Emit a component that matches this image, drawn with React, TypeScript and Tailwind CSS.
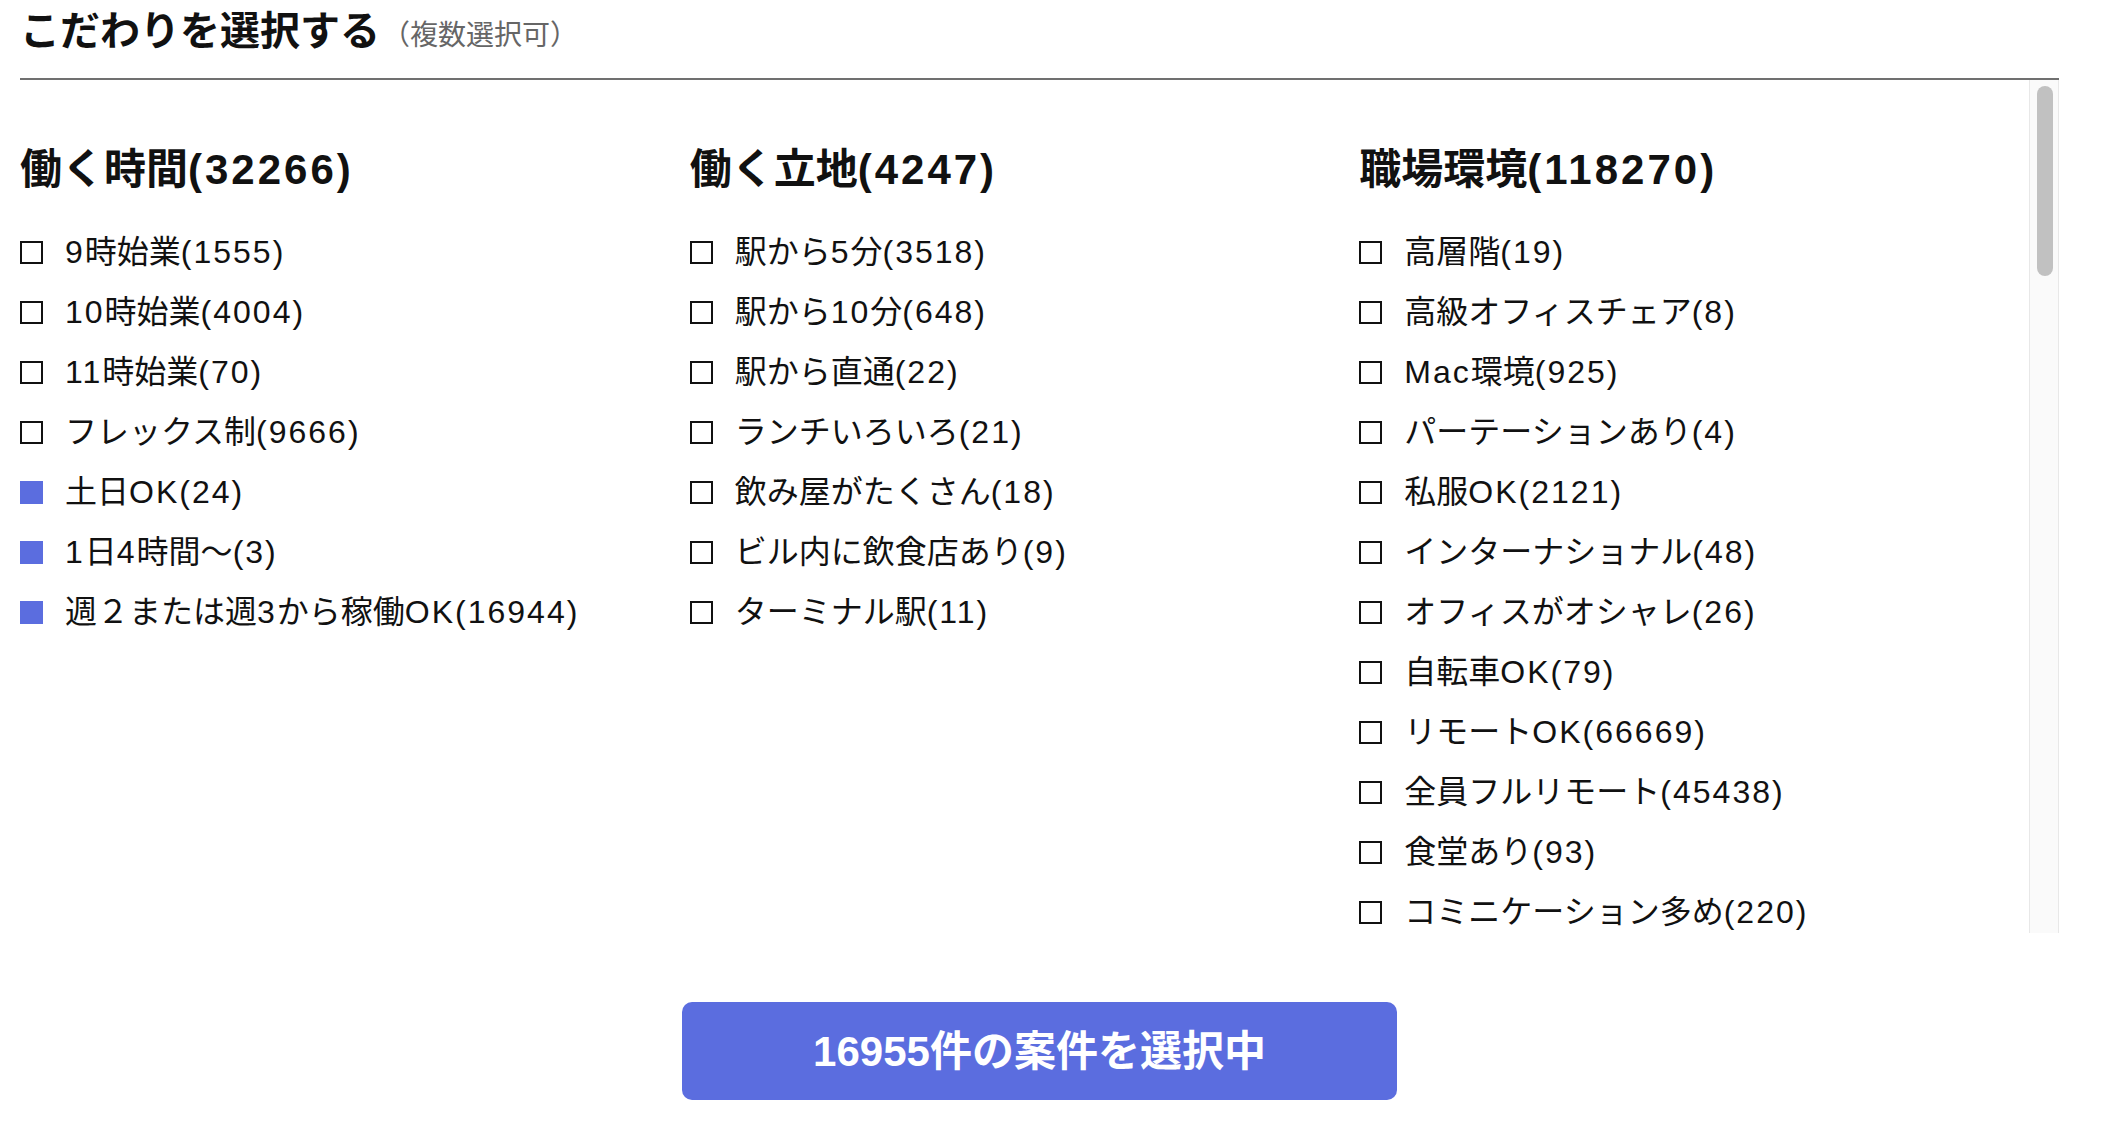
const font = { fontFamily: '"Liberation Sans", "Noto Sans CJK JP", sans-serif' };

type Item = { label: string; checked?: boolean };
type Group = { title: string; items: Item[] };

const groups: Group[] = [
  {
    title: "働く時間(32266)",
    items: [
      { label: "9時始業(1555)" },
      { label: "10時始業(4004)" },
      { label: "11時始業(70)" },
      { label: "フレックス制(9666)" },
      { label: "土日OK(24)", checked: true },
      { label: "1日4時間〜(3)", checked: true },
      { label: "週２または週3から稼働OK(16944)", checked: true },
    ],
  },
  {
    title: "働く立地(4247)",
    items: [
      { label: "駅から5分(3518)" },
      { label: "駅から10分(648)" },
      { label: "駅から直通(22)" },
      { label: "ランチいろいろ(21)" },
      { label: "飲み屋がたくさん(18)" },
      { label: "ビル内に飲食店あり(9)" },
      { label: "ターミナル駅(11)" },
    ],
  },
  {
    title: "職場環境(118270)",
    items: [
      { label: "高層階(19)" },
      { label: "高級オフィスチェア(8)" },
      { label: "Mac環境(925)" },
      { label: "パーテーションあり(4)" },
      { label: "私服OK(2121)" },
      { label: "インターナショナル(48)" },
      { label: "オフィスがオシャレ(26)" },
      { label: "自転車OK(79)" },
      { label: "リモートOK(66669)" },
      { label: "全員フルリモート(45438)" },
      { label: "食堂あり(93)" },
      { label: "コミニケーション多め(220)" },
    ],
  },
];

// latin runs are a bit wider in the original font, so space them out
const Txt = ({ s, track }: { s: string; track: string }) => (
  <>
    {s.split(/([\x21-\x7e]+)/).map((p, i) =>
      /[\x21-\x7e]/.test(p) ? (
        <span key={i} className={track}>
          {p}
        </span>
      ) : (
        p
      )
    )}
  </>
);

const Checkbox = ({ checked }: { checked?: boolean }) =>
  checked ? (
    <span className="h-[23px] w-[23px] shrink-0 bg-[#5b6ddf]" />
  ) : (
    <span className="h-[23px] w-[23px] shrink-0 border-2 border-[#111] bg-white" />
  );

const App = () => {
  return (
    <div style={font} className="min-h-screen bg-white text-[#111]">
      <div className="ml-[20px] w-[2039px]">
        <div className="flex h-[80px] items-baseline border-b-2 border-[#707070] pt-[3px]">
          <h1 className="text-[40px] font-bold leading-[56px]">こだわりを選択する</h1>
          <span className="ml-[2px] text-[28px] leading-[56px] text-[#666]">（複数選択可）</span>
        </div>

        <div className="flex h-[853px]">
          <div className="min-w-0 flex-1 overflow-hidden">
            <div className="grid grid-cols-3 pt-[62px]">
              {groups.map((g) => (
                <section key={g.title}>
                  <h2 className="mb-[24px] text-[42px] font-bold leading-[56px]">
                    <Txt s={g.title} track="tracking-[3px]" />
                  </h2>
                  <ul>
                    {g.items.map((it) => (
                      <li key={it.label} className="flex h-[60px] items-center gap-[22px]">
                        <Checkbox checked={it.checked} />
                        <span className="whitespace-nowrap text-[32px] leading-[40px]">
                          <Txt s={it.label} track="tracking-[2px]" />
                        </span>
                      </li>
                    ))}
                  </ul>
                </section>
              ))}
            </div>
          </div>
          <div className="w-[30px] shrink-0 border-x border-[#e8e8e8] bg-[#fafafa]">
            <div className="ml-[7px] mt-[6px] h-[190px] w-[16px] rounded-full bg-[#c1c1c1]" />
          </div>
        </div>

        <div className="flex justify-center pt-[69px]">
          <button className="h-[98px] w-[715px] rounded-[10px] bg-[#5b6ddf] text-[42px] font-bold text-white">
            16955件の案件を選択中
          </button>
        </div>
      </div>
    </div>
  );
};

export default App;
